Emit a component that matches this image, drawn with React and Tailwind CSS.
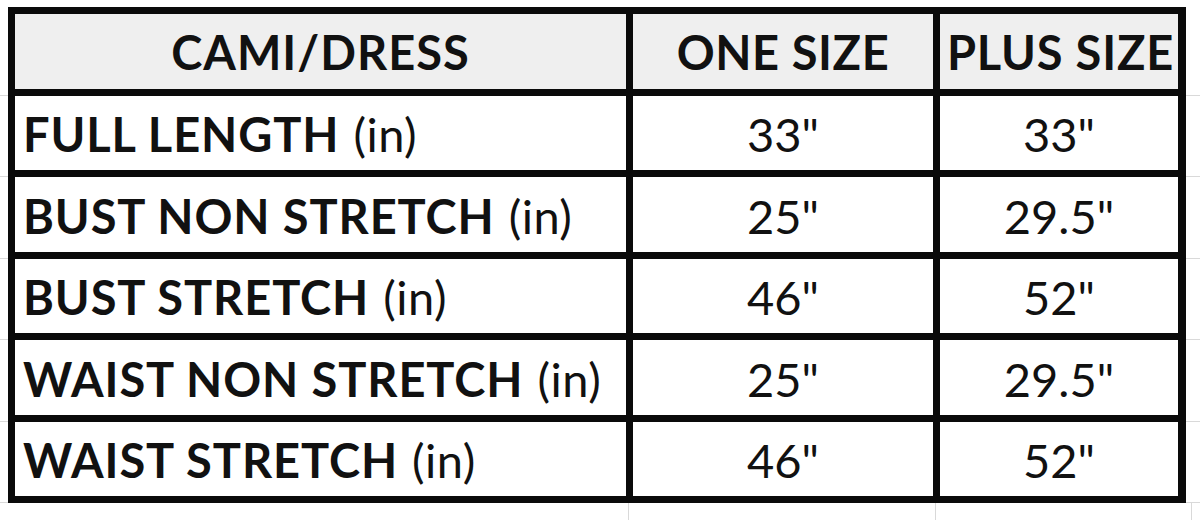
const rows = [
  ["FULL LENGTH", '33"', '33"'],
  ["BUST NON STRETCH", '25"', '29.5"'],
  ["BUST STRETCH", '46"', '52"'],
  ["WAIST NON STRETCH", '25"', '29.5"'],
  ["WAIST STRETCH", '46"', '52"'],
];

const font = { fontFamily: "Lato, 'Open Sans', sans-serif" };

function SideStrip() {
  // faint sheet gridlines continuing outside the table
  return (
    <div className="flex flex-col pt-[7px]">
      {[0, 1, 2, 3, 4, 5].map((i) => (
        <div key={i} className="h-[81.5px] border-b border-[#d9d9d9]" />
      ))}
    </div>
  );
}

export default function App() {
  return (
    <div className="w-[1200px] h-[520px] bg-white overflow-hidden text-[#111]" style={font}>
      <div className="flex pt-[7px]">
        <div className="w-[8px] shrink-0"><SideStrip /></div>
        <div className="w-[1178px] shrink-0 border-[7px] border-[#0a0a0a] bg-[#0a0a0a] grid grid-cols-[611px_300px_238px] gap-[7px]">
          <div className="h-[74.5px] bg-[#efefef] flex items-center justify-center pt-[2px] text-[47px] font-bold tracking-[1px]">CAMI/DRESS</div>
          <div className="h-[74.5px] bg-[#efefef] flex items-center justify-center pt-[2px] text-[47px] font-bold tracking-[0.6px]">ONE SIZE</div>
          <div className="h-[74.5px] bg-[#efefef] flex items-center justify-end pr-[4px] pt-[2px] text-[47px] font-bold tracking-[0.8px]">PLUS SIZE</div>
          {rows.map(([label, one, plus]) => (
            <>
              <div key={label} className="h-[74.5px] bg-white flex items-center pl-[8px] pt-[3px] text-[47px]">
                <span className="font-bold tracking-[0.9px]">{label}</span>
                <span className="ml-[14px] font-normal tracking-[0.5px]">(in)</span>
              </div>
              <div key={label + "1"} className="h-[74.5px] bg-white flex items-center justify-center pt-[3px] text-[47px]">{one}</div>
              <div key={label + "2"} className="h-[74.5px] bg-white flex items-center justify-center pt-[3px] text-[47px]">{plus}</div>
            </>
          ))}
        </div>
        <div className="flex-1"><SideStrip /></div>
      </div>
      <div className="flex h-[20px]">
        <div className="w-[629px] border-r border-[#d9d9d9]" />
        <div className="w-[307px] border-r border-[#d9d9d9]" />
        <div className="w-[256px] border-r border-[#d9d9d9]" />
      </div>
    </div>
  );
}
